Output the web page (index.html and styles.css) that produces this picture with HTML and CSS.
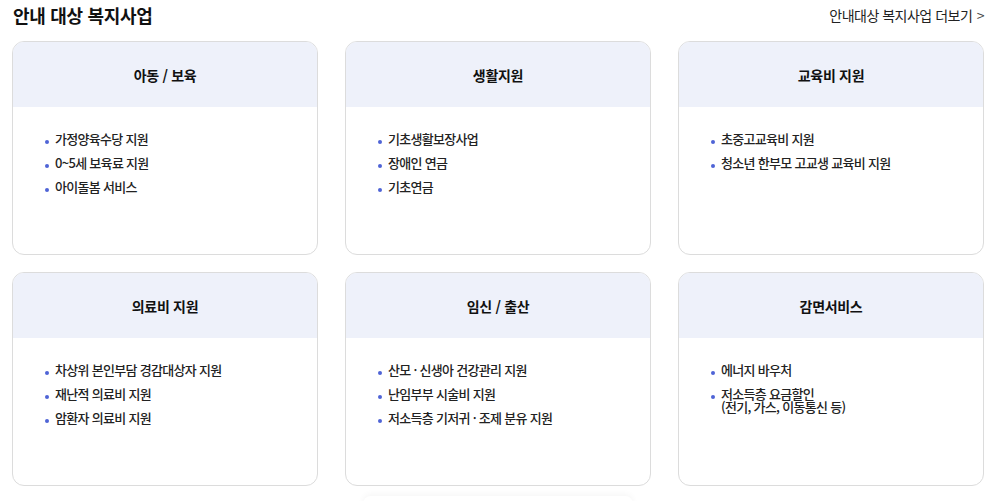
FILE: index.html
```html
<!DOCTYPE html>
<html lang="ko">
<head>
  <meta charset="UTF-8" />
  <meta name="viewport" content="width=device-width, initial-scale=1.0"/>
  <title>안내 대상 복지사업</title>
  <link rel="stylesheet" href="styles.css">
</head>
<body>
  <div class="welfare">
    <!-- 제목 -->
    <div class="welfare-head">
      <h2>안내 대상 복지사업</h2>
      <a href="#" class="more-link">안내대상 복지사업 더보기 <span class="chev">&gt;</span></a>
    </div>

    <!-- 카드 목록 -->
    <div class="card-grid">
      <div class="card">
        <div class="card-title">아동 / 보육</div>
        <ul class="card-list">
          <li>가정양육수당 지원</li>
          <li>0~5세 보육료 지원</li>
          <li>아이돌봄 서비스</li>
        </ul>
      </div>
      <div class="card">
        <div class="card-title">생활지원</div>
        <ul class="card-list">
          <li>기초생활보장사업</li>
          <li>장애인 연금</li>
          <li>기초연금</li>
        </ul>
      </div>
      <div class="card">
        <div class="card-title">교육비 지원</div>
        <ul class="card-list">
          <li>초중고교육비 지원</li>
          <li>청소년 한부모 고교생 교육비 지원</li>
        </ul>
      </div>
      <div class="card">
        <div class="card-title">의료비 지원</div>
        <ul class="card-list">
          <li>차상위 본인부담 경감대상자 지원</li>
          <li>재난적 의료비 지원</li>
          <li>암환자 의료비 지원</li>
        </ul>
      </div>
      <div class="card">
        <div class="card-title">임신 / 출산</div>
        <ul class="card-list">
          <li>산모 · 신생아 건강관리 지원</li>
          <li>난임부부 시술비 지원</li>
          <li>저소득층 기저귀 · 조제 분유 지원</li>
        </ul>
      </div>
      <div class="card">
        <div class="card-title">감면서비스</div>
        <ul class="card-list">
          <li>에너지 바우처</li>
          <li>저소득층 요금할인<br>(전기, 가스, 이동통신 등)</li>
        </ul>
      </div>
    </div>

    <div class="bottom-btn"></div>
  </div>
</body>
</html>
```

FILE: styles.css
```css
body {
  font-family: "Noto Sans CJK KR", "Noto Sans", sans-serif;
  background-color: #fff;
  color: #222;
  margin: 0;
  padding: 0;
}

.welfare {
  padding: 0 12px;
}

.welfare-head {
  display: flex;
  justify-content: space-between;
  align-items: center;
  height: 30px;
  margin-bottom: 11px;
}

.welfare-head h2 {
  font-size: 18px;
  font-weight: 700;
  margin: 0;
  margin-left: 1px;
  color: #111;
  letter-spacing: -0.3px;
}

.more-link {
  font-size: 14px;
  color: #222;
  text-decoration: none;
  letter-spacing: -0.5px;
}

.chev {
  margin-left: 1px;
  color: #444;
}

.card-grid {
  display: grid;
  grid-template-columns: repeat(3, 1fr);
  column-gap: 27px;
  row-gap: 17px;
}

.card {
  border: 1px solid #dcdcdc;
  border-radius: 12px;
  overflow: hidden;
  height: 214px;
  box-sizing: border-box;
  background-color: #fff;
}

.card-title {
  background-color: #eef1fa;
  height: 65px;
  display: flex;
  align-items: center;
  justify-content: center;
  font-size: 14px;
  font-weight: 700;
  color: #111;
  letter-spacing: -0.3px;
}

.card-list {
  list-style: none;
  margin: 0;
  padding: 25px 0 0 42px;
}

.card-list li {
  position: relative;
  font-size: 13px;
  font-weight: 500;
  line-height: 13px;
  color: #222;
  margin-bottom: 11px;
  letter-spacing: -0.7px;
}

.card-list li::before {
  content: "";
  position: absolute;
  left: -10px;
  top: 8px;
  width: 4px;
  height: 4px;
  border-radius: 50%;
  background-color: #4f64d6;
}

.bottom-btn {
  width: 270px;
  height: 40px;
  margin: 10px auto 0 auto;
  border-radius: 8px;
  box-shadow: 0 -2px 6px rgba(0,0,0,0.04);
}
```
